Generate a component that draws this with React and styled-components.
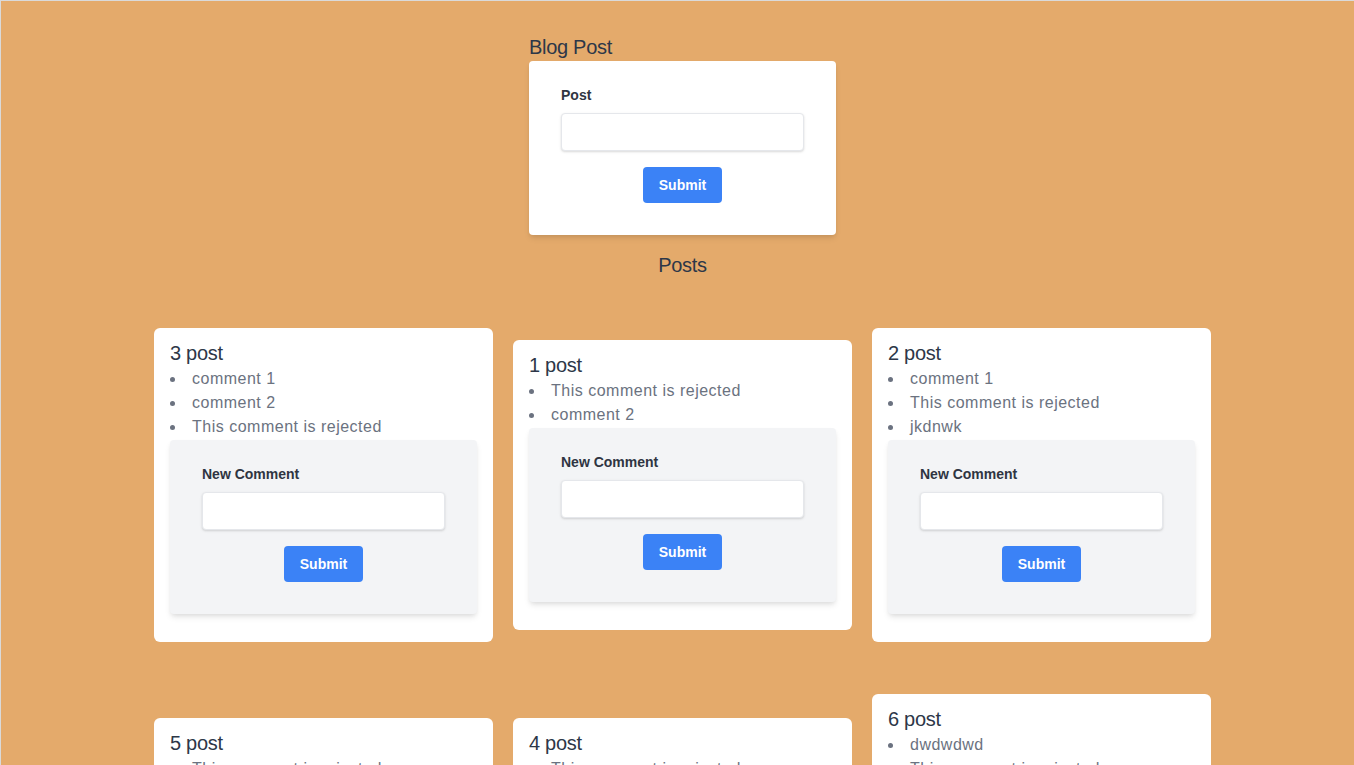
import React from "react";
import styled, { createGlobalStyle } from "styled-components";

const GlobalStyle = createGlobalStyle`
  html, body {
    margin: 0;
    padding: 0;
  }
  body {
    background: #e4aa6b;
    font-family: "Liberation Sans", Arial, sans-serif;
  }
  * {
    box-sizing: border-box;
  }
`;

const Page = styled.div`
  min-height: 100vh;
  border-top: 1px solid #dadada;
  border-left: 1px solid #dadada;
  padding: 32px 0 40px 10px;
  display: flex;
  flex-direction: column;
  align-items: center;
`;

const Section = styled.div`
  width: 307px;
`;

const Heading = styled.h1`
  margin: 0;
  font-size: 20px;
  line-height: 28px;
  font-weight: 400;
  letter-spacing: -0.3px;
  color: #2d3748;
  text-align: ${(p) => (p.center ? "center" : "left")};
`;

const FormBox = styled.form`
  background: ${(p) => (p.muted ? "#f3f4f6" : "#ffffff")};
  border-radius: 4px;
  box-shadow: 0 4px 6px -1px rgba(0, 0, 0, 0.1), 0 2px 4px -1px rgba(0, 0, 0, 0.06);
  padding: 24px 32px 32px;
  margin: ${(p) => (p.muted ? "1px 0 0" : "0 0 16px")};
  display: flex;
  flex-direction: column;
`;

const Label = styled.label`
  font-size: 14px;
  line-height: 20px;
  font-weight: 700;
  color: #2f3542;
  margin-bottom: 8px;
`;

const Input = styled.input`
  width: 100%;
  height: 38px;
  border: 1px solid #e5e7eb;
  border-radius: 4px;
  box-shadow: 0 1px 3px rgba(0, 0, 0, 0.1), 0 1px 2px rgba(0, 0, 0, 0.06);
  padding: 8px 12px;
  font-size: 16px;
  font-family: inherit;
  color: #374151;
  margin-bottom: 16px;
  outline: none;
  background: #fff;
`;

const Button = styled.button`
  align-self: center;
  background: #3b82f6;
  color: #fff;
  border: none;
  border-radius: 4px;
  font-family: inherit;
  font-size: 14px;
  line-height: 20px;
  font-weight: 700;
  padding: 8px 16px;
  cursor: pointer;
`;

const Grid = styled.div`
  width: 1057px;
  margin-top: 49px;
  display: flex;
  flex-wrap: wrap;
  align-items: center;
  column-gap: 20px;
  row-gap: 52px;
`;

const Card = styled.div`
  width: 339px;
  background: #fff;
  border-radius: 6px;
  padding: 12px 16px 28px;
`;

const CardTitle = styled.h3`
  margin: 0;
  font-size: 20px;
  line-height: 27px;
  font-weight: 400;
  letter-spacing: -0.3px;
  color: #2d3748;
`;

const Comments = styled.ul`
  margin: 0;
  padding: 0;
  list-style: disc inside;
  color: #6b7280;
  font-size: 16px;
  line-height: 24px;
  letter-spacing: 0.5px;
`;

const Comment = styled.li`
  padding: 0;
`;

const posts = [
  { id: 3, comments: ["comment 1", "comment 2", "This comment is rejected"] },
  { id: 1, comments: ["This comment is rejected", "comment 2"] },
  { id: 2, comments: ["comment 1", "This comment is rejected", "jkdnwk"] },
  { id: 5, comments: ["This comment is rejected"] },
  { id: 4, comments: ["This comment is rejected"] },
  { id: 6, comments: ["dwdwdwd", "This comment is rejected", "comment 1"] },
];

function PostCard({ post }) {
  return (
    <Card>
      <CardTitle>{post.id} post</CardTitle>
      <Comments>
        {post.comments.map((c, i) => (
          <Comment key={i}>{c}</Comment>
        ))}
      </Comments>
      <FormBox muted onSubmit={(e) => e.preventDefault()}>
        <Label htmlFor={"comment-" + post.id}>New Comment</Label>
        <Input id={"comment-" + post.id} type="text" />
        <Button type="submit">Submit</Button>
      </FormBox>
    </Card>
  );
}

export default function App() {
  return (
    <Page>
      <GlobalStyle />
      <Section>
        <Heading>Blog Post</Heading>
        <FormBox onSubmit={(e) => e.preventDefault()}>
          <Label htmlFor="post">Post</Label>
          <Input id="post" type="text" />
          <Button type="submit">Submit</Button>
        </FormBox>
        <Heading center>Posts</Heading>
      </Section>
      <Grid>
        {posts.map((p) => (
          <PostCard key={p.id} post={p} />
        ))}
      </Grid>
    </Page>
  );
}
